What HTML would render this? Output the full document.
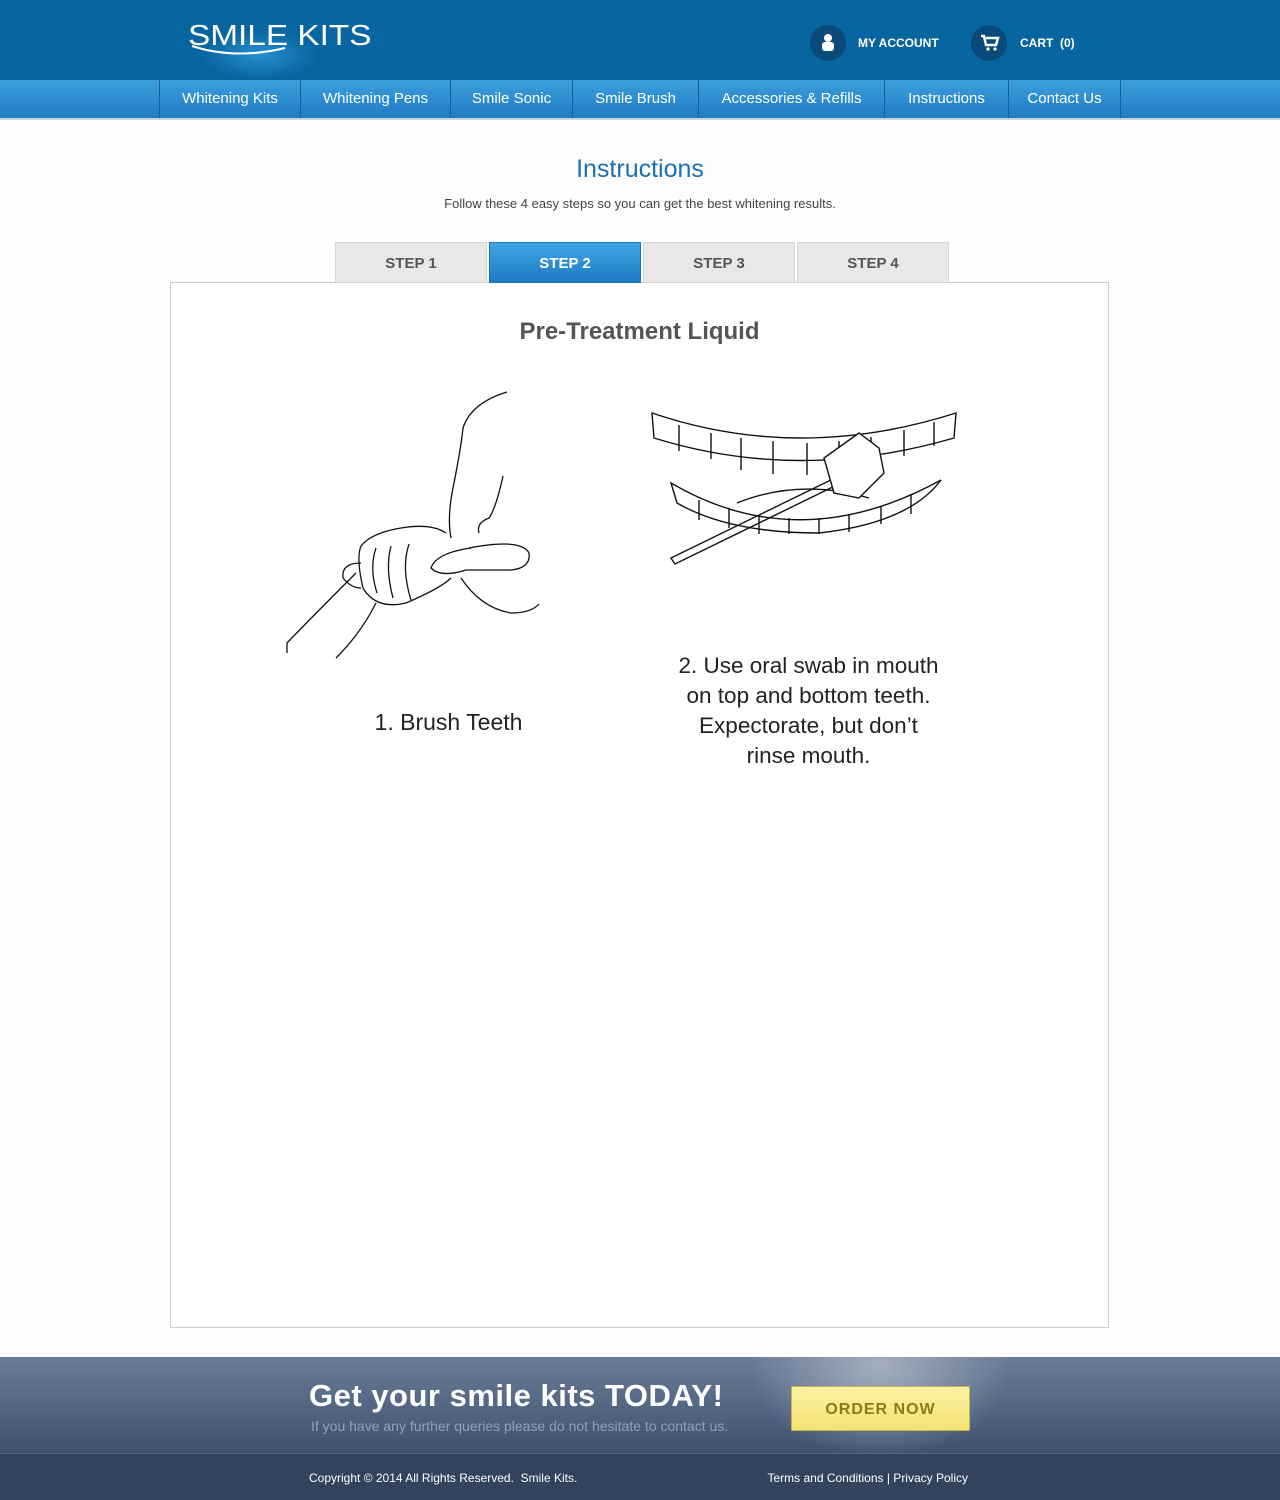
<!DOCTYPE html>
<html><head><meta charset="utf-8"><style>
*{margin:0;padding:0;box-sizing:border-box}
body{width:1280px;height:1500px;background:#fdfdfd;font-family:"Liberation Sans",sans-serif;position:relative;overflow:hidden}
.top{position:absolute;left:0;top:0;width:1280px;height:80px;background:#07659f}
.logo{position:absolute;left:188px;top:20px;color:#fff;font-size:29px;letter-spacing:0px;font-weight:300;transform:scaleX(1.15);transform-origin:left}
.glow{position:absolute;left:200px;top:30px;width:120px;height:50px;background:radial-gradient(ellipse at center,rgba(60,170,240,.6),rgba(7,101,159,0) 70%)}
.ico{position:absolute;top:25px;width:36px;height:36px;border-radius:50%;background:#0a4a7a}
.tl{position:absolute;top:36px;color:#fff;font-size:12px;font-weight:bold}
.nav{position:absolute;left:0;top:80px;width:1280px;height:40px;background:linear-gradient(#3c9fdd,#1f7cc4);border-bottom:2px solid #c9d6e0}
.nav span{position:absolute;top:0;height:38px;line-height:38px;color:#fff;font-size:15px;text-align:center;border-left:1px solid #1a5e94}
h1{position:absolute;top:155px;width:1280px;text-align:center;font-weight:normal;color:#1c6fb0;font-size:25px}
.sub{position:absolute;top:196px;width:1280px;text-align:center;font-size:13px;color:#444}
.tab{position:absolute;top:242px;width:152px;height:41px;line-height:41px;text-align:center;background:#e8e8e8;border:1px solid #d5d5d5;color:#555;font-weight:bold;font-size:15px}
.box{position:absolute;left:170px;top:282px;width:939px;height:1046px;border:1px solid #ccc;background:#fff}
.cap{position:absolute;color:#222;font-size:23px;text-align:center;line-height:30px}
.cta{position:absolute;left:0;top:1357px;width:1280px;height:96px;background:radial-gradient(ellipse 130px 90px at 880px 10px,#a3adbe,rgba(0,0,0,0)),linear-gradient(#6b7c97,#3f5170)}
.foot{position:absolute;left:0;top:1453px;width:1280px;height:47px;background:#33435d;border-top:1px solid #56667f;color:#fff;font-size:12px}
</style></head><body>
<div class="top"><div class="glow"></div><div class="logo">SMILE KITS</div>
<svg style="position:absolute;left:190px;top:44px" width="100" height="16"><path d="M2 2 Q45 16 95 4" stroke="#fff" stroke-width="2" fill="none"/></svg>
<div class="ico" style="left:810px"></div><div class="tl" style="left:858px">MY ACCOUNT</div>
<div class="ico" style="left:971px"></div><div class="tl" style="left:1020px">CART&nbsp; (0)</div>
<svg style="position:absolute;left:820px;top:33px" width="16" height="20"><circle cx="8" cy="5" r="4" fill="#fff"/><rect x="2" y="9" width="12" height="9" rx="3" fill="#fff"/></svg>
<svg style="position:absolute;left:980px;top:34px" width="20" height="18"><path d="M1 2h3l2 9h10l2-7H6" stroke="#fff" stroke-width="2.5" fill="none"/><circle cx="8" cy="15" r="1.6" fill="#fff"/><circle cx="15" cy="15" r="1.6" fill="#fff"/></svg>
</div>
<div class="nav">
<span style="left:159px;width:141px">Whitening Kits</span><span style="left:300px;width:150px">Whitening Pens</span><span style="left:450px;width:122px">Smile Sonic</span><span style="left:572px;width:126px">Smile Brush</span><span style="left:698px;width:186px">Accessories &amp; Refills</span><span style="left:884px;width:124px">Instructions</span><span style="left:1008px;width:113px;border-right:1px solid #1a5e94">Contact Us</span>
</div>
<h1>Instructions</h1>
<div class="sub">Follow these 4 easy steps so you can get the best whitening results.</div>
<div class="box">
<div style="position:absolute;top:35px;width:937px;text-align:center;font-size:24px;font-weight:bold;color:#555">Pre-Treatment Liquid</div>
<svg style="position:absolute;left:110px;top:105px" width="270" height="280" fill="none" stroke="#111" stroke-width="1.3">
<path d="M226 4 Q190 15 182 40 Q180 60 172 100 Q166 130 170 150"/><path d="M222 88 Q215 120 208 130 Q195 135 198 145"/>
<path d="M188 160 Q240 150 248 165 Q250 180 230 182 L185 182 Q160 190 150 180 Q155 165 190 160"/>
<path d="M165 145 Q150 135 120 140 Q90 145 80 158 Q75 170 82 200 Q95 222 125 215 Q160 200 170 190"/>
<path d="M80 175 Q60 175 62 190 Q70 200 80 200"/><path d="M95 160 Q88 180 96 205"/><path d="M110 158 Q104 180 112 210"/><path d="M128 156 Q120 180 130 212"/>
<path d="M180 190 Q200 220 230 225 Q250 225 258 216"/><path d="M75 185 Q30 230 6 255 L6 265"/><path d="M95 215 Q80 245 55 270"/>
</svg>
<svg style="position:absolute;left:478px;top:125px" width="310" height="160" fill="none" stroke="#111" stroke-width="1.4">
<path d="M3 5 L5 30 Q150 75 305 30 L307 5 Q150 55 3 5Z"/>
<path d="M30 17v26M62 25v26M92 30v32M124 33v33M158 35v32M190 33v32M222 29v30M255 22v26M285 14v24"/>
<path d="M22 75 Q150 150 292 72 Q260 115 170 125 Q80 125 28 95Z"/>
<path d="M50 92v20M80 100v20M110 108v18M140 110v16M170 110v16M200 106v18M232 98v18M262 86v20"/>
<path d="M88 95 Q150 70 220 90"/>
<path d="M22 150 L190 68 L194 74 L26 156 Z"/><path d="M175 50 L210 25 L230 40 L235 65 L210 90 L185 85 Z" fill="#fff"/>
</svg>
<div class="cap" style="left:150px;top:424px;width:255px">1. Brush Teeth</div>
<div class="cap" style="left:505px;top:368px;width:265px;font-size:22.5px">2. Use oral swab in mouth on top and bottom teeth. Expectorate, but don’t rinse mouth.</div>
</div>
<div class="tab" style="left:335px">STEP 1</div>
<div class="tab" style="left:489px;background:linear-gradient(#3ea5e3,#1d7bc4);color:#fff;border-color:#1d74b6">STEP 2</div>
<div class="tab" style="left:643px">STEP 3</div>
<div class="tab" style="left:797px">STEP 4</div>
<div class="cta">
<div style="position:absolute;left:309px;top:21px;color:#fff;font-size:31px;font-weight:bold;letter-spacing:0.5px">Get your smile kits TODAY!</div>
<div style="position:absolute;left:311px;top:61px;color:#8ea0bd;font-size:14px">If you have any further queries please do not hesitate to contact us.</div>
<div style="position:absolute;left:791px;top:29px;width:179px;height:45px;line-height:45px;text-align:center;background:linear-gradient(#fbf1a3,#f4e273);border:1px solid #c8b54e;border-radius:2px;color:#8c7b12;font-weight:bold;font-size:16px;letter-spacing:1px">ORDER NOW</div>
</div>
<div class="foot"><div style="position:absolute;left:309px;top:17px">Copyright © 2014 All Rights Reserved.&nbsp; Smile Kits.</div><div style="position:absolute;right:312px;top:17px">Terms and Conditions | Privacy Policy</div></div>
</body></html>
